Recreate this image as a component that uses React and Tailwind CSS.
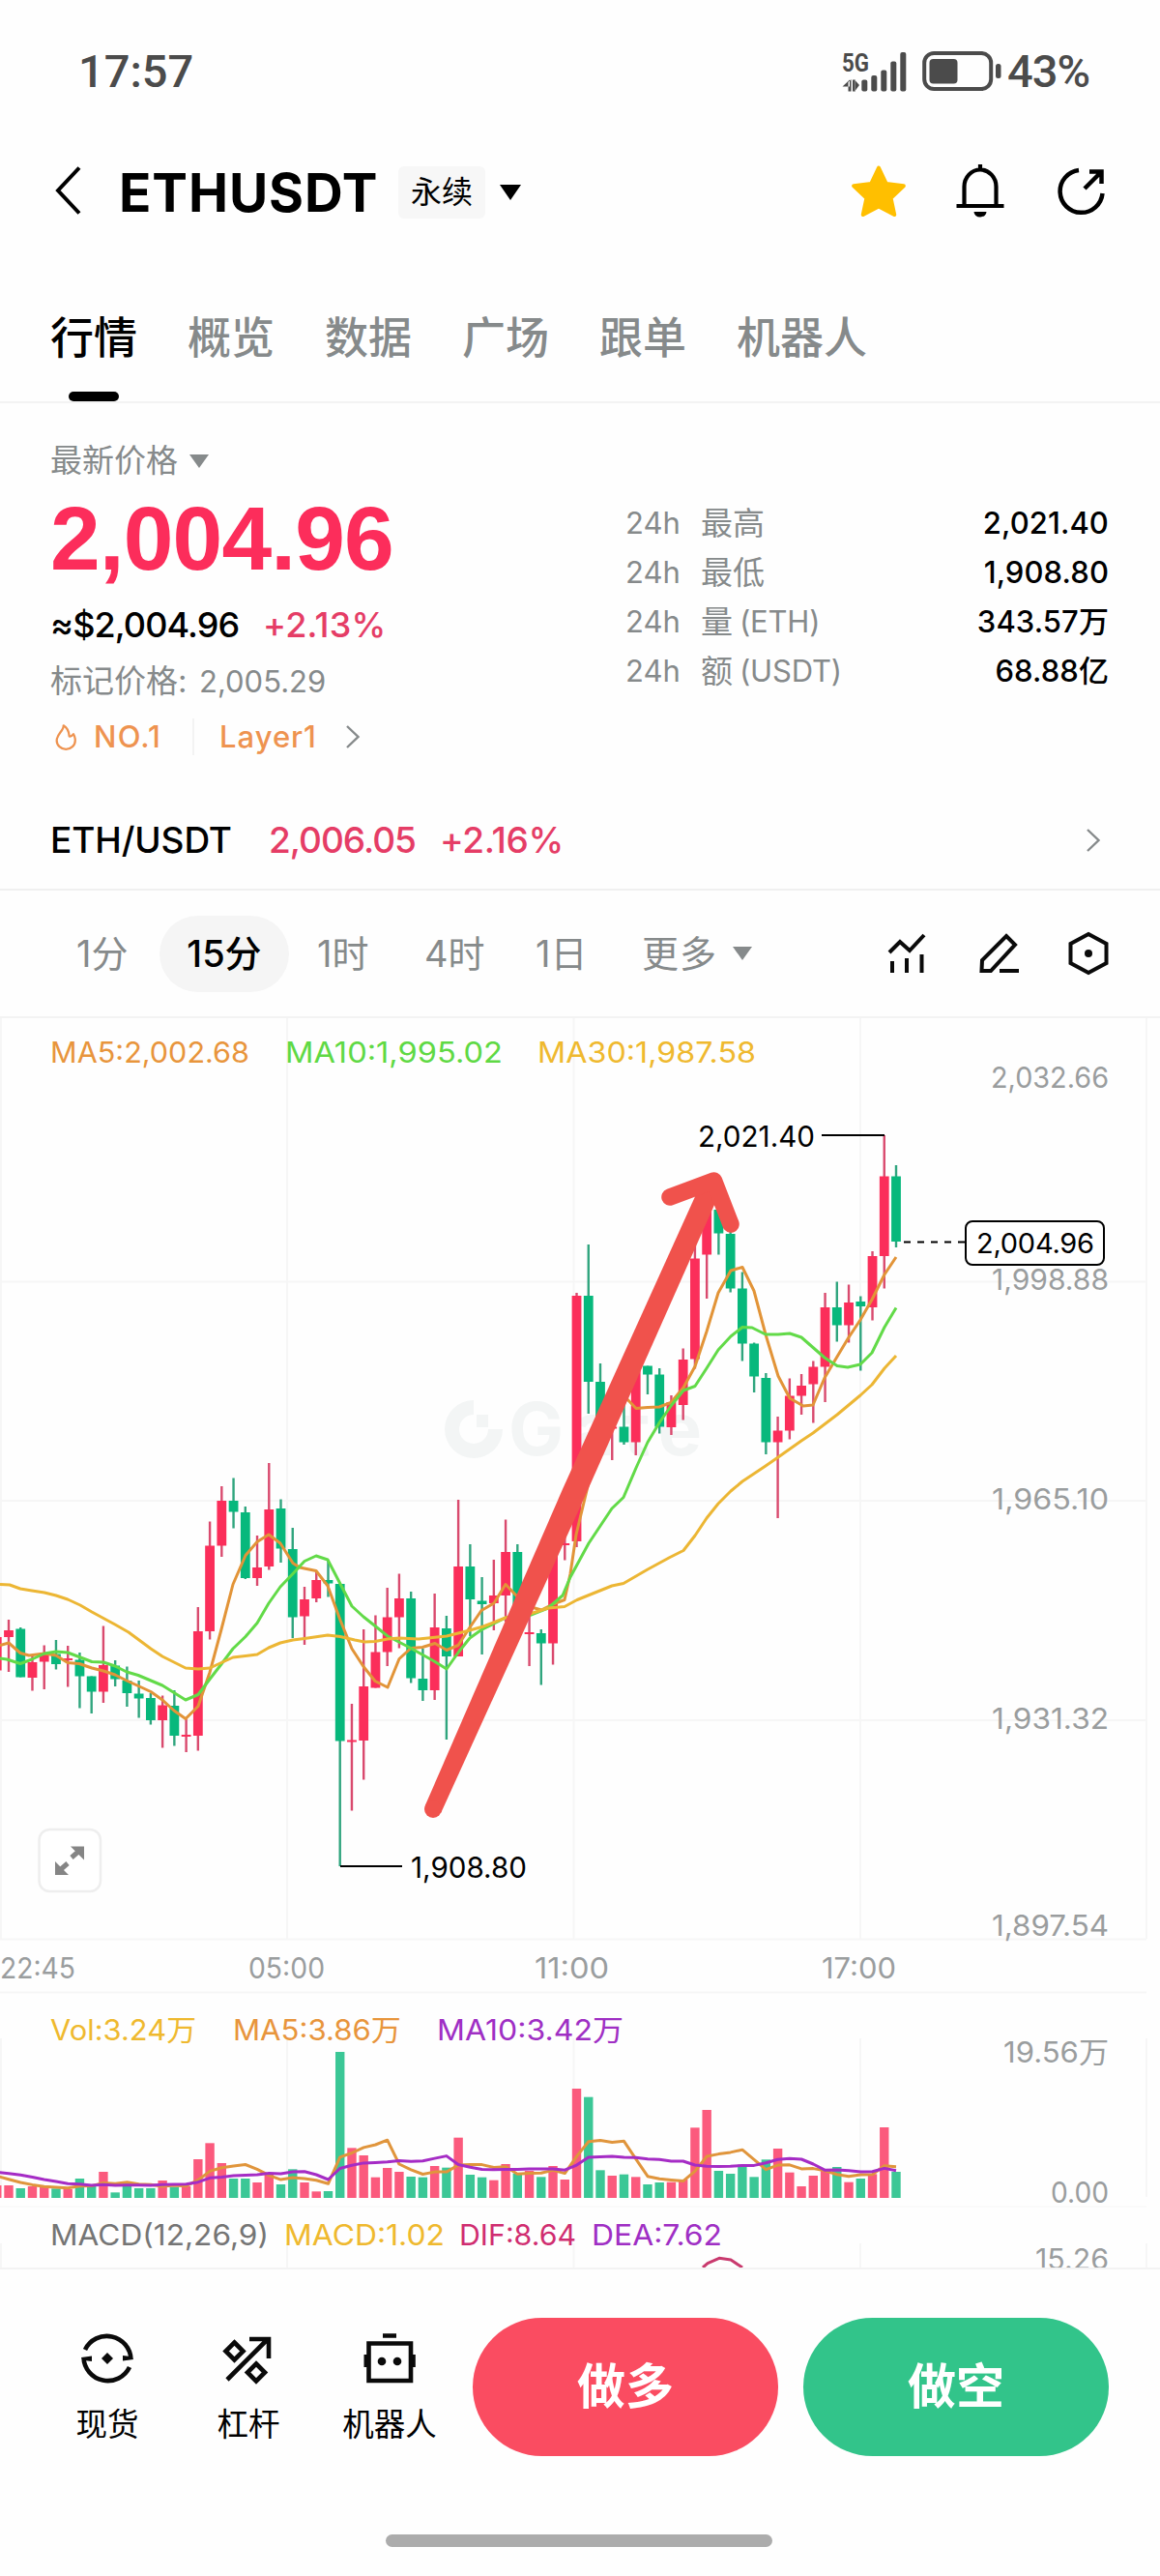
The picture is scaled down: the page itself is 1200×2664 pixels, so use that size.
import { clsx } from "clsx";

const UP = "#fb2e5a";
const DOWN = "#07b87c";
const STEP = 12.24;
const FIRST_X = 9;

// [direction, bodyTop, bodyBottom, high, low, volume]
const CANDLES = [
    ["u", 1693, 1727.5, 1693, 1727.5, 39],
    ["u", 1686, 1693, 1675, 1729, 39],
    ["d", 1684.5, 1734.5, 1683, 1734.5, 30],
    ["u", 1719, 1735, 1711, 1748.5, 36],
    ["u", 1709, 1718.5, 1701.5, 1747, 33],
    ["d", 1710.5, 1721, 1696, 1726.5, 29],
    ["u", 1715, 1717, 1702, 1744.5, 27],
    ["d", 1716.5, 1733.5, 1709, 1766.5, 60],
    ["d", 1733.5, 1749.5, 1733.5, 1772, 37],
    ["u", 1722, 1749.5, 1681.5, 1761, 81],
    ["d", 1722.5, 1736.5, 1717, 1744, 17],
    ["d", 1738, 1751, 1723.5, 1765, 49],
    ["d", 1751.5, 1756.5, 1738, 1776.5, 30],
    ["d", 1756, 1779, 1751, 1783.5, 30],
    ["u", 1763.5, 1779, 1753.5, 1807.5, 54],
    ["d", 1764, 1795, 1748, 1805.5, 34],
    ["u", 1794, 1796, 1777.5, 1812, 36],
    ["u", 1687, 1795, 1662, 1810.5, 120],
    ["u", 1598.5, 1687, 1573.5, 1695.5, 170],
    ["u", 1552, 1598.5, 1537, 1610, 108],
    ["d", 1552, 1563.5, 1528.5, 1580.5, 60],
    ["d", 1564, 1632, 1558, 1633, 60],
    ["u", 1621, 1632, 1588, 1640, 48],
    ["u", 1561, 1620, 1513, 1623.5, 74],
    ["d", 1560, 1601.5, 1550.5, 1616, 42],
    ["d", 1602, 1672.5, 1580, 1694, 89],
    ["u", 1654, 1671.5, 1641, 1701, 48],
    ["u", 1634, 1653, 1625, 1657, 20],
    ["d", 1634, 1637.5, 1613, 1651.5, 21],
    ["d", 1638, 1800.5, 1638, 1930, 453],
    ["u", 1799.5, 1801.5, 1762, 1872.5, 155],
    ["u", 1744, 1800, 1685, 1840.5, 132],
    ["u", 1708.5, 1745.5, 1670.5, 1745.5, 64],
    ["u", 1672.5, 1708.5, 1642, 1723, 93],
    ["u", 1653, 1672.5, 1627.5, 1704.5, 81],
    ["d", 1653, 1735.5, 1646, 1740.5, 66],
    ["d", 1736, 1748, 1705, 1759, 64],
    ["u", 1683, 1748, 1648, 1758, 99],
    ["d", 1684, 1713, 1671, 1799, 94],
    ["u", 1620, 1713, 1551, 1713, 187],
    ["d", 1620, 1654, 1597, 1692, 72],
    ["d", 1655.5, 1659, 1631, 1711, 64],
    ["u", 1650, 1658, 1613, 1686, 55],
    ["u", 1605, 1650, 1571.5, 1677, 105],
    ["d", 1605, 1664.5, 1597, 1672, 76],
    ["u", 1688, 1690, 1668, 1723, 84],
    ["d", 1689, 1699.5, 1685, 1742.5, 65],
    ["u", 1598, 1699.5, 1594, 1721.5, 99],
    ["u", 1596, 1598, 1587, 1613.5, 57],
    ["u", 1340, 1594, 1337, 1600, 339],
    ["d", 1340, 1429, 1287, 1462, 313],
    ["d", 1429, 1483, 1410, 1503, 86],
    ["u", 1475.5, 1477.5, 1450, 1510, 69],
    ["d", 1475.5, 1491.5, 1443, 1494, 73],
    ["u", 1412, 1491.5, 1405, 1505, 65],
    ["d", 1412.5, 1421.5, 1412.5, 1442, 42],
    ["d", 1421.5, 1475.5, 1415, 1482.5, 48],
    ["u", 1450, 1476, 1443, 1484, 49],
    ["u", 1406, 1453, 1394.5, 1468.5, 57],
    ["u", 1301.5, 1405.5, 1283, 1415.5, 218],
    ["u", 1250, 1297.5, 1247, 1343, 273],
    ["d", 1251, 1275.5, 1250, 1297.5, 84],
    ["d", 1276, 1332.5, 1273, 1336.5, 75],
    ["d", 1332.5, 1389.5, 1315.5, 1407.5, 97],
    ["d", 1389.5, 1423.5, 1388.5, 1440, 65],
    ["d", 1425, 1491.5, 1420, 1504, 119],
    ["u", 1479.5, 1491.5, 1465, 1570, 153],
    ["u", 1443.5, 1479.5, 1425.5, 1488.5, 79],
    ["u", 1433, 1443.5, 1421, 1463, 36],
    ["u", 1413.5, 1431.5, 1407.5, 1471.5, 69],
    ["u", 1352, 1413.5, 1337, 1450, 84],
    ["d", 1352, 1370.5, 1325.5, 1387.5, 96],
    ["u", 1347, 1370.5, 1328.5, 1388.5, 49],
    ["d", 1346, 1351, 1340.5, 1417.5, 60],
    ["u", 1299, 1352, 1294, 1365.5, 74],
    ["u", 1216.5, 1299, 1174, 1332.5, 219],
    ["d", 1216.5, 1284, 1205, 1290, 81],
];

const PRICE_MA30 =
    "0,1638.5 10,1639 21,1643 33,1645 46,1647 58,1650 70,1654 83,1660 95,1667 107,1673.5 119,1680 133,1688 156,1705 168,1713 180,1719 192,1725 205,1726 217,1725 241,1714 266,1711 278,1704 290,1699 303,1696 315,1694.5 339,1691 352,1692.5 367,1696 377,1698 388,1697.5 401,1695 413,1694 433,1695 462,1692 486,1686 500,1682 523,1673 548,1669 567,1663 584,1661.5 597,1654.5 633,1640 645,1637.5 670,1623 693,1610.5 707,1603.5 719,1588 731,1570 743,1555 756,1542 768,1532 792,1516 805,1507 829,1490 841,1482 866,1463 890,1443 902,1432 915,1415 927,1402";
const PRICE_MA10 =
    "0,1715 7,1716 21,1720.5 33,1716 46,1710 58,1708 70,1709 95,1718.5 107,1719 119,1723 131,1729 143,1732.5 168,1743 192,1758 205,1752.5 217,1736.5 229,1721 241,1705 254,1692.5 266,1678.5 278,1658 290,1641 303,1627.5 315,1614.5 327,1609 339,1613 352,1638 364,1661 376,1672 388,1681.5 401,1692 425,1704.5 450,1718.5 462,1726 474,1709 486,1694 498,1685.5 511,1679 523,1673 548,1670.5 567,1663 582,1650 590,1631 609,1596 633,1560 645,1548.5 658,1518 670,1491.5 682,1471.5 694,1454 707,1438 719,1433.5 731,1415 743,1396 756,1382 768,1372.5 778,1373 792,1380 805,1380 817,1379 829,1383 841,1393.5 853,1404 866,1412.5 877,1414 890,1411 902,1399 915,1372.5 927,1352.5";
const PRICE_MA5 =
    "0,1701.5 9,1699 21,1709.5 30,1712 46,1710 58,1712 70,1719.5 82,1720.5 95,1725 107,1728 119,1732 131,1738 143,1743.5 156,1749.5 168,1758 180,1769 192,1777.5 205,1764.5 217,1729.5 229,1685 241,1638.5 254,1608.5 266,1594.5 278,1587 290,1596 303,1616.5 310,1621 327,1624.5 339,1640 352,1675.5 364,1705 376,1723.5 388,1738.5 401,1745 413,1715.5 425,1704.5 437,1703.5 450,1699.5 462,1706.5 474,1701.5 486,1683 498,1665.5 511,1658 523,1638.5 535,1651 548,1661.5 560,1665 572,1659 584,1654.5 590,1627.5 596,1587 609,1533 621,1493 633,1463 647,1445 658,1456.5 670,1455.5 682,1455 694,1450.5 707,1435 719,1413 731,1377 743,1337 756,1314 768,1310.5 780,1335 792,1380 805,1423 817,1446 831,1454 841,1453 853,1425 866,1403 878,1383 890,1365 902,1344 915,1318 927,1300";

// volumes that precede the visible range, needed by the averages
const EARLIER_VOLUMES = [80, 100, 110, 90, 90, 80, 72, 60];
const VOLUME_BASE = 2273;

const candleX = (index) => FIRST_X + (index - 1) * STEP;

function volumeAverage(period) {
    const all = [...EARLIER_VOLUMES, ...CANDLES.map((c) => c[5])];

    return CANDLES.map((_, i) => {
        const end = i + EARLIER_VOLUMES.length + 1;
        const part = all.slice(Math.max(0, end - period), end);
        const mean = part.reduce((sum, v) => sum + v, 0) / part.length;
        return `${candleX(i).toFixed(1)},${(VOLUME_BASE - mean / 3).toFixed(1)}`;
    }).join(" ");
}

/* x, center y, width, text, color */
const CHART_LABELS = [
    [52, 1088, 206, "MA5:2,002.68", "#e8953c"],
    [295, 1088, 225, "MA10:1,995.02", "#5fd944"],
    [556, 1088, 226, "MA30:1,987.58", "#efb92f"],
    [1025, 1114, 122, "2,032.66", "#9a9d9e"],
    [1026, 1323, 121, "1,998.88", "#9a9d9e"],
    [1026, 1550, 121, "1,965.10", "#9a9d9e"],
    [1026, 1777, 121, "1,931.32", "#9a9d9e"],
    [1026, 1991, 121, "1,897.54", "#9a9d9e"],
    [0, 2035, 78, "22:45", "#9a9d9e"],
    [257, 2035, 79, "05:00", "#9a9d9e"],
    [553, 2035, 77, "11:00", "#9a9d9e"],
    [850, 2035, 77, "17:00", "#9a9d9e"],
    [52, 2099, 151, "Vol:3.24万", "#efb92f"],
    [241, 2099, 174, "MA5:3.86万", "#e8953c"],
    [452, 2099, 193, "MA10:3.42万", "#9f2fc4"],
    [1038, 2122, 109, "19.56万", "#9a9d9e"],
    [1087, 2267, 60, "0.00", "#9a9d9e"],
    [52, 2311, 226, "MACD(12,26,9)", "#757575"],
    [294, 2311, 166, "MACD:1.02", "#efb92f"],
    [475, 2311, 121, "DIF:8.64", "#d02d70"],
    [612, 2311, 135, "DEA:7.62", "#9f2fc4"],
    [1071, 2336, 76, "15.26", "#9a9d9e"],
    [722, 1175, 121, "2,021.40", "#000"],
    [425, 1931, 120, "1,908.80", "#000"],
];

function Chart() {
    return (
        <svg viewBox="0 1053 1200 1292" className="block h-[1292px] w-[1200px]">
            {/* grid */}
            <g stroke="#f6f6f6" strokeWidth="2">
                {[1, 297, 593.5, 890, 1186].map((x) => (
                    <path key={x} d={`M${x} 1053V2005M${x} 2108V2272M${x} 2320V2345`} />
                ))}
                {[1325.5, 1552, 1779, 2005.5, 2060.5].map((y) => (
                    <path key={y} d={`M0 ${y}H1186`} />
                ))}
                <path d="M0 2282H1186" stroke="#fafafa" />
            </g>

            {/* watermark */}
            <g fill="#f3f5f5">
                <path d="M490 1448a30 30 0 1 0 30 30h-15a15 15 0 1 1-15-15z" />
                <path d="M493 1463h12v13h-12z" />
                <text x="526" y="1505" fontSize="76" fontWeight="700" textLength="200">Gate</text>
            </g>

            {CANDLES.map(([dir, top, bottom, high, low], i) => (
                <g key={i} fill={dir === "u" ? UP : DOWN}>
                    <rect
                        x={candleX(i) - 1.2}
                        y={high}
                        width="2.4"
                        height={low - high}
                        fill={dir === "u" ? "#d94a6e" : "#30a57e"}
                    />
                    <rect x={candleX(i) - 4.9} y={top} width="9.8" height={bottom - top} />
                </g>
            ))}

            <g fill="none" strokeWidth="3" strokeLinejoin="round">
                <polyline points={PRICE_MA5} stroke="#e29438" />
                <polyline points={PRICE_MA10} stroke="#62da48" />
                <polyline points={PRICE_MA30} stroke="#ecb634" />
            </g>

            {/* high / low / last price markers */}
            <path d="M850 1174H915M352 1930H416" stroke="#000" strokeWidth="2" />
            <path d="M935 1284.5H998" stroke="#000" strokeWidth="2" strokeDasharray="7 7" />
            <rect x="999" y="1263" width="143" height="45" rx="7" fill="#fff" stroke="#000" strokeWidth="2" />
            <text x="1010" y="1296" fontSize="29" textLength="122">2,004.96</text>

            {/* volume */}
            {CANDLES.map(([dir, , , , , volume], i) => (
                <rect
                    key={i}
                    x={candleX(i) - 4.7}
                    y={VOLUME_BASE - volume / 3}
                    width="9.4"
                    height={volume / 3}
                    fill={dir === "u" ? "#fb5a7d" : "#3bc796"}
                />
            ))}
            <g fill="none" strokeWidth="3" strokeLinejoin="round">
                <polyline points={volumeAverage(5)} stroke="#e0953c" />
                <polyline points={volumeAverage(10)} stroke="#a52cc5" />
                <path d="M727 2345l5-4.3 12-5.4 12 1.7 12 8" stroke="#c93a6e" />
            </g>

            {CHART_LABELS.map(([x, y, width, text, color]) => (
                <text
                    key={text}
                    x={x}
                    y={y + 10.5}
                    fontSize="29.5"
                    fill={color}
                    textLength={width}
                    lengthAdjust="spacingAndGlyphs"
                >
                    {text}
                </text>
            ))}

            {/* trend arrow */}
            <g fill="#f0524c" stroke="#f0524c">
                <path d="M439.8 1867.3L582 1540 726 1222 747 1228 604 1550 456.2 1874.7z" stroke="none" />
                <circle cx="448" cy="1871" r="9" stroke="none" />
                <path
                    d="M693 1238L738.5 1221 756 1266"
                    fill="none"
                    strokeWidth="17.5"
                    strokeLinecap="round"
                    strokeLinejoin="round"
                />
            </g>

            {/* fullscreen */}
            <rect x="40.5" y="1892" width="63.5" height="64" rx="11" fill="#fff" stroke="#eeeeee" strokeWidth="2.5" />
            <g fill="#858585" stroke="#858585">
                <path d="M73 1909.500h14v14zM57 1925v14h14z" stroke="none" />
                <path d="M74 1921l8-7M70 1927l-8 7" strokeWidth="5" />
            </g>
        </svg>
    );
}

function Caret({ className }) {
    return (
        <svg viewBox="0 0 20 14" preserveAspectRatio="none" className={className} fill="currentColor">
            <path d="M0 0h20L10 14z" />
        </svg>
    );
}

function Chevron({ className }) {
    return (
        <svg viewBox="0 0 16 26" className={className} fill="none" stroke="currentColor" strokeWidth="2.4">
            <path d="M2 2l11.500 11L2 24" />
        </svg>
    );
}

function StatusBar() {
    return (
        <div className="flex h-[148px] items-center pl-[81px] font-[Roboto] text-[47px] font-medium text-[#4b4b4b]">
            <span className="w-[789px]">17:57</span>
            <svg viewBox="870 48 168 50" className="h-[50px] w-[168px]" fill="currentColor">
                <text x="871" y="72.500" fontSize="26" fontWeight="700" textLength="28" lengthAdjust="spacingAndGlyphs">5G</text>
                <path d="M877.500 84v9.500h3V81zM871.500 88.500l7.500-7v7zM882 81.500v12h2.800v-12zM884.500 93v-11l4.500 5z" />
                <rect x="891.300" y="81.500" width="6" height="12" rx="2" />
                <rect x="901.300" y="77" width="6" height="16.500" rx="2" />
                <rect x="911.300" y="71.500" width="6" height="22" rx="2" />
                <rect x="921.300" y="62.500" width="6" height="31" rx="2" />
                <rect x="931.300" y="53" width="6" height="40.500" rx="2" />
                <rect x="956.200" y="54" width="69" height="37" rx="10" fill="none" stroke="currentColor" strokeWidth="4" />
                <rect x="961.500" y="60" width="29" height="25.500" rx="4" />
                <rect x="1030" y="65" width="5.500" height="15" rx="2.500" />
            </svg>
            <span className="ml-[4px] text-[47px] tracking-[-1px]">43%</span>
        </div>
    );
}

function Header() {
    return (
        <div className="flex h-[102px] items-center pl-[56px]">
            <svg viewBox="0 0 30 52" className="mb-1 h-[52px] w-[30px]" fill="none" stroke="#000" strokeWidth="4">
                <path d="M26 2.500L4 26l22 23.500" />
            </svg>
            <h1 className="ml-[37px] w-[289px] text-[55px] font-bold tracking-[0.9px]">ETHUSDT</h1>
            <span className="flex h-[54px] w-[90px] items-center justify-center rounded-md bg-[#f7f7f7] text-[32px]">
                永续
            </span>
            <Caret className="ml-[15px] h-4 w-[22px]" />
            <svg viewBox="0 0 56 54" className="mb-[5px] ml-[342px] h-[54px] w-[56px]" fill="#ffbf00" stroke="#ffbf00" strokeWidth="4" strokeLinejoin="round">
                <path d="M28 3.500l7.800 16.500 18 2.200-13.200 12.600 3.600 17.200L28 43.500 11.800 52l3.600-17.200L2.200 22.200l18-2.200z" />
            </svg>
            <svg viewBox="0 0 50 56" className="mb-[5px] ml-[52px] h-[56px] w-[50px]" fill="none" stroke="#000" strokeWidth="4.200">
                <path d="M25 1v5M8.500 44V24a16.500 17.500 0 0 1 33 0v20M0.500 44h49" />
                <path d="M18.500 50h13a6.500 5.500 0 0 1-13 0z" fill="#000" stroke="none" />
            </svg>
            <svg viewBox="0 0 50 50" className="mb-[2px] ml-[55px] h-[50px] w-[50px]" fill="none" stroke="#000" strokeWidth="4.500">
                <path d="M22 3A22 22 0 1 0 46.500 27" />
                <path d="M33 4.500h12.500V17M45.500 4.500L28 22" />
            </svg>
        </div>
    );
}

const TABS = ["行情", "概览", "数据", "广场", "跟单", "机器人"];

function Tabs() {
    return (
        <nav className="flex h-[167px] gap-[52px] border-b-2 border-[#f3f3f3] pl-[52px] text-[45px] text-[#868a8b]">
            {TABS.map((tab, i) => (
                <div key={tab} className="flex flex-col items-center pt-[70px]">
                    <span className={clsx("leading-[60px] font-medium", i === 0 && "text-black")}>{tab}</span>
                    {i === 0 && <span className="mt-[25px] h-[10px] w-[52px] rounded-full bg-black" />}
                </div>
            ))}
        </nav>
    );
}

const STATS = [
    ["最高", "", "2,021.40"],
    ["最低", "", "1,908.80"],
    ["量", "(ETH)", "343.57万"],
    ["额", "(USDT)", "68.88亿"],
];

function Summary() {
    return (
        <section className="flex h-[403px] justify-between pr-[53px] pl-[52px] text-[33px] whitespace-nowrap text-[#868a8b]">
            <div className="pt-[33px]">
                <div className="flex h-[54px] items-center">
                    最新价格
                    <Caret className="ml-[12px] h-[14px] w-[20px]" />
                </div>
                <div className="flex h-[108px] items-center font-['Liberation_Sans'] text-[93px] font-bold tracking-[-0.9px] text-[#fc2d5b]">
                    2,004.96
                </div>
                <div className="flex h-[68px] items-center text-[36px] font-medium tracking-[-0.9px]">
                    <span className="w-[220px] text-black">≈$2,004.96</span>
                    <span className="tracking-[0.2px] text-[#e53d66]">+2.13%</span>
                </div>
                <div className="flex h-[50px] items-center">
                    <span className="w-[154px]">标记价格:</span>
                    <span className="text-[31px] tracking-[0px]">2,005.29</span>
                </div>
                <div className="flex h-[64px] items-center text-[31px] font-medium text-[#ee9350]">
                    <svg viewBox="0 0 24 30" className="ml-1 h-[28px] w-[24px]" fill="none" stroke="currentColor" strokeWidth="2.400" strokeLinejoin="round">
                        <path d="M9.500 2.500C10 8 2 12 2 19a10 9.500 0 0 0 20.500 0c0-3-.8-5-2-7-1.500 2-3 3-4.500 2.500C15.500 9 14 5 9.500 2.500z" />
                    </svg>
                    <span className="ml-[17px] w-[102px] tracking-[1.2px]">NO.1</span>
                    <span className="h-[38px] w-[2px] bg-[#f3f3f3]" />
                    <span className="ml-[26px] w-[130px] tracking-[1px]">Layer1</span>
                    <Chevron className="h-[26px] w-[16px] text-[#868a8b]" />
                </div>
            </div>

            <div className="w-[500px] pt-[99px]">
                {STATS.map(([label, unit, value]) => (
                    <div key={label} className="flex h-[51px] items-center">
                        <span className="w-[78px] text-[31px]">24h</span>
                        <span>{label}</span>
                        <span className="ml-[7px] text-[31px] tracking-[-0.2px]">{unit}</span>
                        <span className="ml-auto text-[31px] font-medium tracking-[0.1px] text-black">{value}</span>
                    </div>
                ))}
            </div>
        </section>
    );
}

function SpotRow() {
    return (
        <div className="flex h-[101px] items-center border-b-2 border-[#f0f0f0] pr-[61px] pb-[2px] pl-[52px] text-[37px] font-medium">
            <span className="w-[226px] tracking-[-0.1px]">ETH/USDT</span>
            <span className="w-[177px] tracking-[-1px] text-[#e53d66]">2,006.05</span>
            <span className="tracking-[-0.3px] text-[#e53d66]">+2.16%</span>
            <Chevron className="ml-auto h-[26px] w-[16px] text-[#868a8b]" />
        </div>
    );
}

const INTERVALS = [
    ["1分", "w-[86px] ml-[79px]"],
    ["15分", "w-[134px] text-center rounded-full bg-[#f5f5f5] text-black font-medium leading-[79px]"],
    ["1时", "w-[111px] ml-[29px]"],
    ["4时", "w-[115px]"],
    ["1日", "w-[110px]"],
];

function IntervalBar() {
    return (
        <div className="flex h-[132px] items-center border-b-2 border-[#f3f3f3] text-[38px] text-[#868a8b]">
            {INTERVALS.map(([label, className]) => (
                <span key={label} className={className}>{label}</span>
            ))}
            <span className="w-[94px] tracking-[1px]">更多</span>
            <Caret className="h-[14px] w-[20px]" />
            <svg viewBox="0 0 40 42" className="ml-[140px] h-[42px] w-[40px]" fill="none" stroke="#0a0a0a" strokeWidth="4">
                <path d="M2 20l11-11 10 9L38 2M5 29v12M20 26v15M35.500 22v19" />
            </svg>
            <svg viewBox="0 0 42 42" className="ml-[55px] h-[42px] w-[42px]" fill="none" stroke="#0a0a0a" strokeWidth="4">
                <path d="M28 3l9 9-25 27H2.500l.5-11zM21 39h20" />
            </svg>
            <svg viewBox="0 0 42 46" className="ml-[50px] h-[46px] w-[42px]" fill="none" stroke="#0a0a0a" strokeWidth="4">
                <path d="M21 3l18.500 10v20L21 43 2.500 33V13z" />
                <circle cx="21" cy="23" r="4" fill="#0a0a0a" stroke="none" />
            </svg>
        </div>
    );
}

function SpotIcon() {
    return (
        <svg viewBox="0 0 56 56" className="h-14 w-14" fill="none" stroke="#0a0a0a" strokeWidth="4.600">
            <path d="M5 19A25 25 0 0 1 52.500 29M51 37A25 25 0 0 1 3.500 27" />
            <path d="M44 25v5.500l11-1.500-3-3zM12 31v-5.500L1 27l3 3z" fill="#0a0a0a" stroke="none" />
            <path d="M28 22l6 6-6 6-6-6z" fill="#0a0a0a" stroke="none" />
        </svg>
    );
}

function LeverageIcon() {
    return (
        <svg viewBox="0 0 56 56" className="h-14 w-14" fill="none" stroke="#0a0a0a" strokeWidth="4.600">
            <path d="M6 50L48 8M29 8h20v20" />
            <path d="M13.500 11.500l9 9-9 9-9-9zM36 33.500l9 9-9 9-9-9z" />
        </svg>
    );
}

function RobotIcon() {
    return (
        <svg viewBox="0 0 56 56" className="h-14 w-14" fill="none" stroke="#0a0a0a" strokeWidth="4.600">
            <path d="M6.500 12.500h43.500v38.500H6.500zM21 4.500h14" />
            <path d="M4.500 24v13M51.800 24v13" strokeWidth="6" />
            <circle cx="20" cy="31" r="4.300" fill="#0a0a0a" stroke="none" />
            <circle cx="36" cy="31" r="4.300" fill="#0a0a0a" stroke="none" />
        </svg>
    );
}

const ACTIONS = [
    ["现货", SpotIcon],
    ["杠杆", LeverageIcon],
    ["机器人", RobotIcon],
];

function BottomBar() {
    return (
        <footer className="border-t-2 border-[#f3f3f3] pl-[38px]">
            <div className="flex h-[274px] pt-[50px]">
                <div className="flex w-[451px]">
                    {ACTIONS.map(([label, Icon]) => (
                        <div key={label} className="flex w-[146px] shrink-0 flex-col items-center pt-[14px]">
                            <Icon />
                            <span className="mt-[17px] text-[32.500px] leading-[48px]">{label}</span>
                        </div>
                    ))}
                </div>
                <button className="h-[143px] w-[316px] rounded-full bg-[#fa4c61] text-[50px] font-bold text-white">
                    做多
                </button>
                <button className="ml-[26px] h-[143px] w-[316px] rounded-full bg-[#32c48a] text-[50px] font-bold text-white">
                    做空
                </button>
            </div>
            <div className="ml-[361px] h-[13px] w-[400px] rounded-full bg-[#acacac]" />
        </footer>
    );
}

export default function App() {
    return (
        <div className="h-[2664px] w-[1200px] overflow-hidden bg-[#fefefe] font-['Inter','Noto_Sans_CJK_SC',sans-serif] text-black">
            <StatusBar />
            <Header />
            <Tabs />
            <Summary />
            <SpotRow />
            <IntervalBar />
            <Chart />
            <BottomBar />
        </div>
    );
}
